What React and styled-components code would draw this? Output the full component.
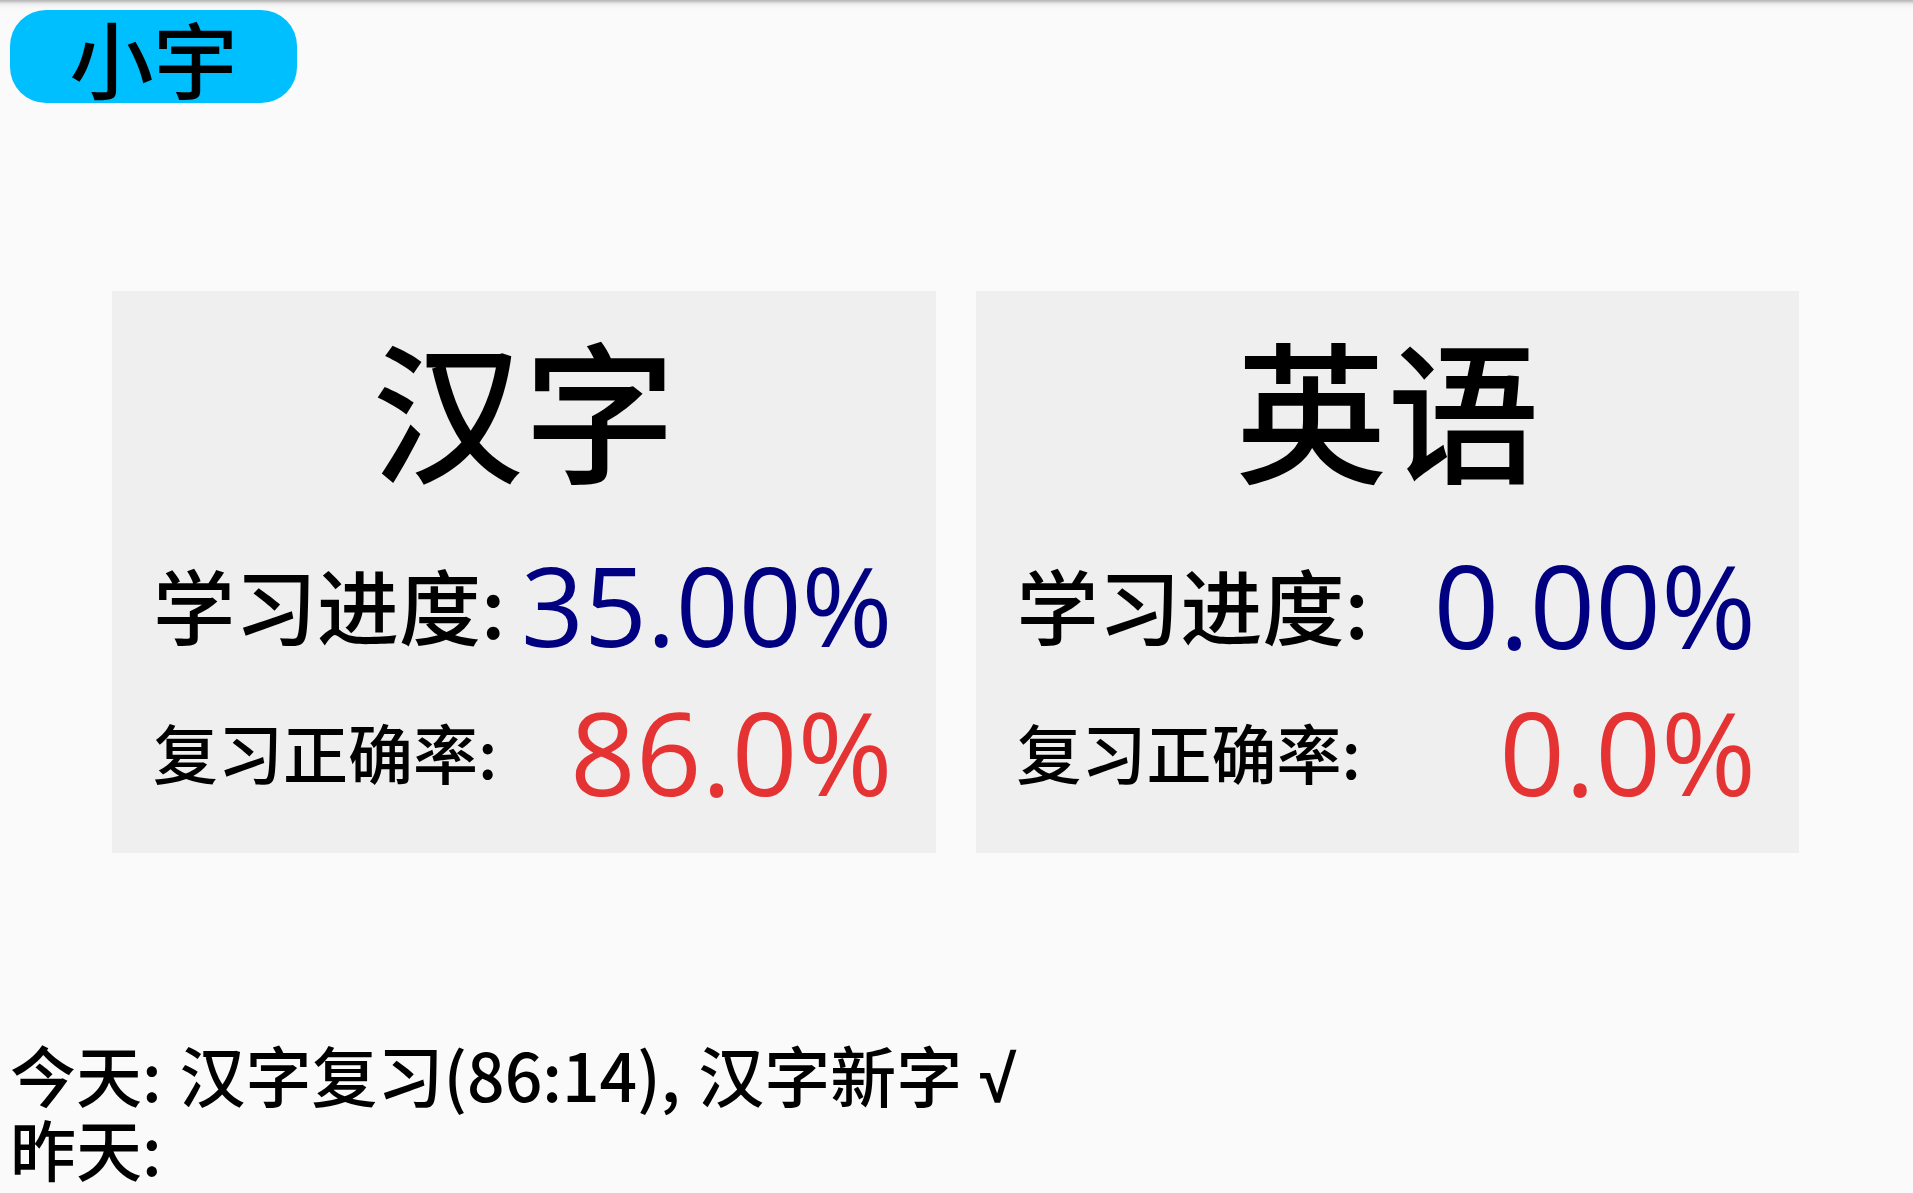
import styled, { createGlobalStyle } from "styled-components"

const GlobalStyle = createGlobalStyle`
  body {
    margin: 0;
    background-color: #FAFAFA;
    font-family: "Noto Sans CJK SC", "Noto Sans", sans-serif;
    color: #000;
  }
`;

const Page = styled.div`
  min-height: 1193px;
  display: flex;
  flex-direction: column;
  background: linear-gradient(#b4b4b4 0px, #ececec 4px, #f7f7f7 7px, #FAFAFA 10px);
`;

const Header = styled.div`
  display: flex;
  padding: 10px 0 0 10px;
`;

const NameButton = styled.button`
  width: 287px;
  height: 93px;
  border: none;
  border-radius: 36px;
  background-color: #00BFFF;
  color: #000;
  font-family: "Noto Sans CJK SC", sans-serif;
  font-weight: 500;
  font-size: 84px;
  line-height: 84px;
  padding: 0;
  overflow: visible;
  display: flex;
  justify-content: center;
  align-items: center;
`;

const CardRow = styled.div`
  display: grid;
  grid-template-columns: 1fr 1fr;
  gap: 40px;
  padding: 0 114px 0 112px;
  margin-top: 188px;
`;

const Card = styled.div`
  height: 562px;
  box-sizing: border-box;
  background-color: #EFEFEF;
  padding-top: 39px;
  display: flex;
  flex-direction: column;
`;

const Title = styled.h2`
  margin: 0 0 57px 0;
  font-family: "Noto Sans CJK SC", sans-serif;
  font-weight: 500;
  font-size: 152px;
  line-height: 1;
  text-align: center;
`;

const StatRow = styled.div`
  height: 130px;
  display: flex;
  justify-content: space-between;
  align-items: center;
  padding: 0 43px 0 41px;
  margin-bottom: ${props => props.$gap || 0}px;
`;

const Label = styled.span`
  font-family: "Noto Sans CJK SC", sans-serif;
  font-weight: 500;
  font-size: ${props => props.$size}px;
  line-height: 1;
  white-space: nowrap;
`;

const Value = styled.span`
  font-family: "Open Sans", "Noto Sans", sans-serif;
  font-size: ${props => props.$size}px;
  line-height: 1;
  color: ${props => props.$color};
`;

const Footer = styled.div`
  margin-top: 186px;
  padding-left: 10px;
  font-family: "Noto Sans CJK SC", sans-serif;
  font-weight: 500;
  font-size: 66px;
  line-height: 68px;
  word-spacing: 3px;

  p {
    margin: 0;
    white-space: nowrap;
  }
`;

const Check = styled.span`
  font-family: "Liberation Sans", sans-serif;
  font-weight: bold;
`;

const subjects = [
  { name: "汉字", progress: "35.00%", progressSize: 110, accuracy: "86.0%" },
  { name: "英语", progress: "0.00%", progressSize: 115, accuracy: "0.0%" },
]

const App = () => {
  return (
    <>
      <GlobalStyle />
      <Page>
        <Header>
          <NameButton>小宇</NameButton>
        </Header>
        <CardRow>
          {subjects.map(s => (
            <Card key={s.name}>
              <Title>{s.name}</Title>
              <StatRow $gap={17}>
                <Label $size={82}>学习进度:</Label>
                <Value $size={s.progressSize} $color="#000080">{s.progress}</Value>
              </StatRow>
              <StatRow>
                <Label $size={65}>复习正确率:</Label>
                <Value $size={115} $color="#E53333">{s.accuracy}</Value>
              </StatRow>
            </Card>
          ))}
        </CardRow>
        <Footer>
          <p>今天: 汉字复习(86:14), 汉字新字 <Check>√</Check></p>
          <p>昨天:</p>
        </Footer>
      </Page>
    </>
  )
}

export default App
